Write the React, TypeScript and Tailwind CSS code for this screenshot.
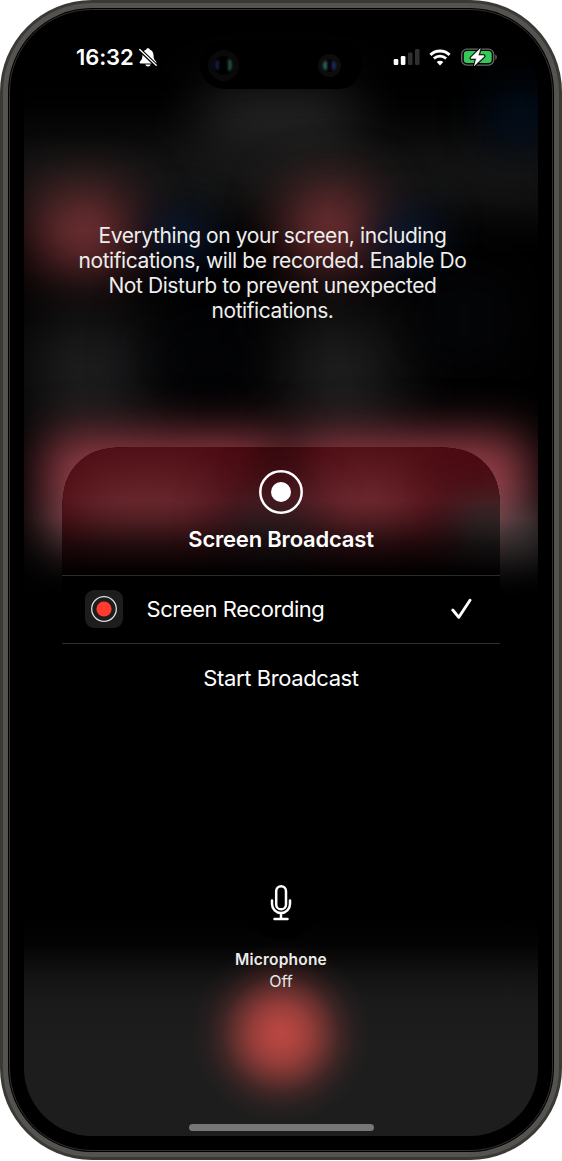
import React from "react";

const glows = [
  // toolbar and header area
  "left-[180px] top-[66px] h-[68px] w-[150px] bg-[#272727] blur-[28px]",
  "left-[-40px] top-[122px] h-[60px] w-[594px] bg-[#1b1b1b] blur-[30px]",
  "left-[466px] top-[70px] h-[48px] w-[60px] bg-[#021022] blur-[22px]",
  // upper tiles
  "left-[10px] top-[168px] h-[80px] w-[100px] rounded-[30px] bg-[#7c3538] blur-[28px]",
  "left-[262px] top-[164px] h-[80px] w-[90px] rounded-[30px] bg-[#7c3538] blur-[28px]",
  "left-[126px] top-[190px] h-[50px] w-[60px] rounded-[24px] bg-[#0d1f3c] blur-[22px]",
  "left-[354px] top-[190px] h-[50px] w-[60px] rounded-[24px] bg-[#0d1f3c] blur-[22px]",
  // lower tiles
  "left-[6px] top-[290px] h-[120px] w-[120px] rounded-[30px] bg-[#1f1f20] blur-[34px]",
  "left-[256px] top-[290px] h-[120px] w-[120px] rounded-[30px] bg-[#1f1f20] blur-[34px]",
  "left-[390px] top-[250px] h-[90px] w-[100px] rounded-[30px] bg-[#050609] blur-[30px]",
  "left-[130px] top-[290px] h-[90px] w-[100px] rounded-[30px] bg-[#030407] blur-[30px]",
  // wide tiles behind the sheet
  "left-[20px] top-[411px] h-[134px] w-[242px] rounded-[20px] bg-linear-to-b from-[#983e48] from-35% to-[#5c4d51] blur-[24px]",
  "left-[266px] top-[411px] h-[134px] w-[238px] rounded-[20px] bg-linear-to-b from-[#983e48] from-35% to-[#645a5d] blur-[24px]",
  "left-[478px] top-[496px] h-[50px] w-[44px] bg-[#464444] blur-[20px]",
];

function Backdrop() {
  return (
    <div className="absolute inset-0 overflow-hidden rounded-t-[66px] rounded-b-[68px] bg-black">
      {glows.map((g) => (
        <div key={g} className={`absolute ${g}`} />
      ))}
      <div className="absolute inset-x-0 top-[494px] bottom-0 bg-linear-to-b from-transparent to-black to-[80px]" />
      <div className="absolute inset-x-0 bottom-0 h-[216px] bg-[linear-gradient(to_bottom,transparent,#040404_12%,#141414_27%,#1a1a1b_38%,#1d1d1d_60%)]" />
      <div className="absolute bottom-[12px] left-[167px] size-[180px] rounded-full bg-[radial-gradient(closest-side,#b94742_0%,rgba(185,71,66,0.94)_14%,rgba(185,71,66,0.77)_32%,rgba(185,71,66,0.5)_49%,rgba(185,71,66,0.22)_66%,rgba(185,71,66,0.07)_82%,transparent_100%)]" />
      <div className="absolute bottom-[196px] left-[220px] size-[74px] rounded-full bg-black" />
    </div>
  );
}

function BellOff() {
  return (
    <svg viewBox="0 0 18 19" className="h-[19px] w-[18px]" fill="#fff">
      <path d="M9 .3c-1 0-1.8.6-2 1.5C4.700 2.600 3.600 4.500 3.500 7c-.1 3.600-.7 4.700-2.500 6.600-.8.9-.4 1.900.7 1.900h14.600c1.100 0 1.500-1 .7-1.900-1.800-1.900-2.400-3-2.500-6.600-.1-2.500-1.200-4.400-3.500-5.200C10.800.9 10 .3 9 .3Z" />
      <path d="M6.400 16.400h5.200c-.2 1.200-1.200 2-2.600 2s-2.400-.8-2.600-2Z" />
      <path d="M-.3.700 17.200 17.500" stroke="#000" strokeWidth="3.800" />
      <path d="M.7 1.500 17.200 17.300" stroke="#fff" strokeWidth="1.300" strokeLinecap="round" />
    </svg>
  );
}

function StatusBar() {
  return (
    <div className="flex h-[68px] items-start pt-[22px]">
      <div className="flex h-[22px] w-[134px] items-center pl-[52px]">
        <span className="w-[63px] shrink-0 text-[22px] leading-none font-semibold tracking-[-0.1px]">16:32</span>
        <div className="shrink-0"><BellOff /></div>
      </div>
      <div className="ml-auto flex h-[22px] items-center pr-[40px]">
        <svg viewBox="0 0 27 18" className="h-[18px] w-[27px]">
          <rect x="0.700" y="11" width="4.600" height="6" rx="1.300" fill="#fff" />
          <rect x="7.800" y="8" width="4.600" height="9" rx="1.300" fill="#fff" />
          <rect x="15" y="4.500" width="4.500" height="12.500" rx="1.300" fill="#303030" />
          <rect x="22" y="1" width="4.500" height="16" rx="1.300" fill="#303030" />
        </svg>
        <svg viewBox="0 0 22 17" className="ml-[9px] h-[17px] w-[22px]" fill="none" stroke="#fff">
          <path d="M1.400 5.900a13.800 13.800 0 0 1 19.200 0" strokeWidth="2.900" />
          <path d="M4.900 9.600a8.800 8.800 0 0 1 12.200 0" strokeWidth="2.800" />
          <path d="M11 16.600 7.700 13.100a4.700 4.700 0 0 1 6.600 0Z" fill="#fff" stroke="none" />
        </svg>
        <svg viewBox="0 0 37 18" className="ml-[10px] h-[18px] w-[37px]">
          <rect x="0.700" y="1.100" width="32" height="16" rx="5.200" fill="none" stroke="#686868" strokeWidth="1.300" />
          <rect x="2.800" y="3.100" width="27.900" height="12" rx="3.300" fill="#34c759" />
          <path d="M34.300 6.400c2 .9 2 4.500 0 5.400Z" fill="#686868" />
          <path d="M19.300.6 10 9.600c-.4.400-.2 1 .4 1h5l-2.100 7.200 9.700-9.200c.4-.4.200-1-.4-1h-5.300Z" fill="#fff" stroke="#000" strokeWidth="2.600" />
          <path d="M19.300.6 10 9.600c-.4.400-.2 1 .4 1h5l-2.100 7.200 9.700-9.200c.4-.4.200-1-.4-1h-5.300Z" fill="#fff" stroke="#fff" strokeWidth="0.500" />
        </svg>
      </div>
    </div>
  );
}

function Island() {
  return (
    <div className="absolute top-[17px] left-[176px] flex h-[48px] w-[162px] items-center justify-between rounded-[24px] bg-black pr-[21px] pl-[8px]">
      <div className="flex size-[31px] items-center justify-center rounded-full bg-[#090909]">
        <div className="flex size-[19px] items-center justify-between rounded-full bg-black px-[1px]">
          <div className="h-[10px] w-[4px] rounded-l-full bg-[#141b3f] blur-[1px]" />
          <div className="h-[12px] w-[4px] rounded-r-full bg-[#224a46] blur-[1px]" />
        </div>
      </div>
      <div className="flex size-[23px] items-center justify-center rounded-full bg-[#0d0d0e]">
        <div className="flex size-[13px] items-center justify-between rounded-full bg-[#040405]">
          <div className="h-[9px] w-[4px] rounded-l-full bg-[#2c615b] blur-[0.8px]" />
          <div className="h-[9px] w-[4px] rounded-r-full bg-[#202a5c] blur-[0.8px]" />
        </div>
      </div>
    </div>
  );
}

function Sheet() {
  return (
    <section className="mx-[38px] mt-[124px] h-[300px] bg-black [clip-path:path('M0,84C0,59.900,0,47.800,4.100,34.700C9.300,20.500,20.500,9.300,34.700,4.100C47.800,0,59.900,0,84,0H354.500C378.600,0,390.700,0,403.800,4.100C418,9.300,429.200,20.500,434.400,34.700C438.500,47.800,438.500,59.900,438.500,84V300H0Z')]">
      <div className="relative isolate flex h-[129px] flex-col items-center border-b border-[#2c2929] pt-[22px]">
        <div className="absolute inset-0 -z-10 overflow-hidden bg-[#4c0b12]">
          <div className="absolute top-[28px] left-[10px] h-[90px] w-[150px] rounded-[30px] bg-[#6c2b31] blur-[28px]" />
          <div className="absolute top-[24px] left-[240px] h-[90px] w-[120px] rounded-[30px] bg-[#702c32] blur-[28px]" />
          <div className="absolute top-[-30px] left-[204px] h-[70px] w-[30px] bg-[#26090d] blur-[20px]" />
          <div className="absolute top-[54px] left-[166px] h-[80px] w-[84px] bg-[#38292d] blur-[24px]" />
          <div className="absolute top-[54px] left-[390px] h-[90px] w-[80px] bg-[#3b3536] blur-[22px]" />
          <div className="absolute inset-0 bg-[linear-gradient(to_bottom,transparent_42%,rgba(0,0,0,0.25)_57%,rgba(0,0,0,0.65)_76%,rgba(0,0,0,0.97)_98%)]" />
        </div>
        <svg viewBox="0 0 46 46" className="size-[46px]">
          <circle cx="23" cy="23" r="20.700" fill="none" stroke="#fff" strokeWidth="2.500" />
          <circle cx="23" cy="23" r="10" fill="#fff" />
        </svg>
        <h1 className="mt-[9px] text-[22px] leading-[30px] font-semibold tracking-[-0.200px] whitespace-nowrap">Screen Broadcast</h1>
      </div>
      <div className="flex h-[68px] items-center border-b border-[#2e2e2e] pr-[28px] pb-[1px] pl-[23px]">
        <div className="flex size-[38px] items-center justify-center rounded-[9px] bg-[#1d1d1d]">
          <svg viewBox="0 0 28 28" className="size-[28px]">
            <circle cx="14" cy="14" r="12.300" fill="none" stroke="#dedede" strokeWidth="1.300" />
            <circle cx="14" cy="14" r="7.600" fill="#ff3b30" />
          </svg>
        </div>
        <span className="ml-[23.500px] text-[22px] leading-[30px] tracking-[-0.450px] whitespace-nowrap">Screen Recording</span>
        <svg viewBox="0 0 22 22" className="ml-auto size-[22px]" fill="none" stroke="#fff" strokeWidth="2.900" strokeLinecap="round" strokeLinejoin="round">
          <path d="M2.800 12 8.800 19.300 20 2.300" />
        </svg>
      </div>
      <button className="flex h-[69px] w-full items-center justify-center text-[22px] tracking-[-0.400px] whitespace-nowrap">Start Broadcast</button>
    </section>
  );
}

function Microphone() {
  return (
    <div className="mt-[137px] flex flex-col items-center">
      <svg viewBox="0 0 22 38" className="h-[38px] w-[22px]" fill="none" stroke="#fff" strokeWidth="2.500" strokeLinecap="round">
        <rect x="6.200" y="2.300" width="9.800" height="23" rx="4.900" />
        <path d="M2 16.500v3.600a9 9 0 0 0 18 0v-3.600M11 29v6M4.500 35h13" />
      </svg>
      <p className="mt-[27px] text-[15.500px] leading-[22px] font-semibold tracking-[0.200px] text-[#ececec]">Microphone</p>
      <p className="text-[16px] leading-[20px] text-[#e6e6e6]">Off</p>
    </div>
  );
}

export default function App() {
  return (
    <div className="h-[1161px] w-[562px] overflow-hidden bg-white font-['Inter','Liberation_Sans',sans-serif] text-white antialiased">
      <div className="h-[1160px] rounded-[92px] bg-[#3b3936] p-[3px]">
        <div className="h-full rounded-[89px] bg-[#555350] p-[5px]">
          <div className="h-full rounded-[84px] bg-black p-[1px]">
            <div className="h-full rounded-[83px] border border-[#303030] bg-black px-[14px] py-[14px]">
              <main className="relative h-full">
                <Backdrop />
                <Island />
                <div className="relative">
                  <StatusBar />
                  <p className="mt-[131px] pr-[17px] text-center text-[21px] leading-[25px] tracking-[-0.420px] text-[#eeeeee]">
                    <span className="block whitespace-nowrap">Everything on your screen, including</span>
                    <span className="block whitespace-nowrap">notifications, will be recorded. Enable Do</span>
                    <span className="block whitespace-nowrap">Not Disturb to prevent unexpected</span>
                    <span className="block whitespace-nowrap">notifications.</span>
                  </p>
                  <Sheet />
                  <Microphone />
                </div>
                <div className="absolute bottom-[5px] left-[165px] h-[7px] w-[185px] rounded-full bg-[#777777]" />
              </main>
            </div>
          </div>
        </div>
      </div>
    </div>
  );
}
